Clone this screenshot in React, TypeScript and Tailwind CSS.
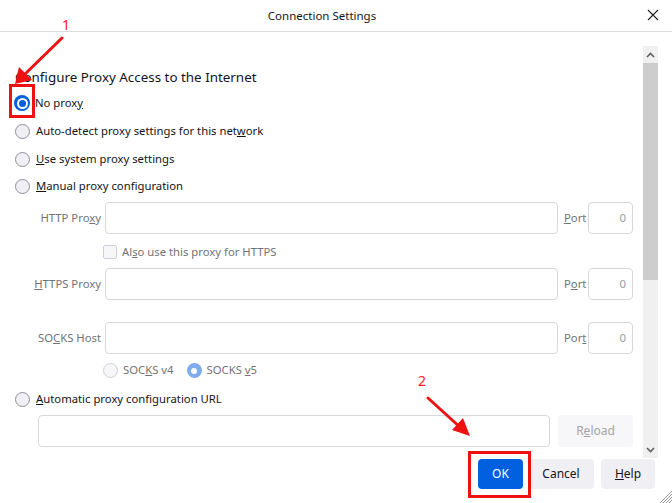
import React from "react";

const font = { fontFamily: '"Noto Sans", "Open Sans", sans-serif' };

function Radio({ checked = false, disabled = false }: { checked?: boolean; disabled?: boolean }) {
  if (checked && disabled) {
    return (
      <span className="flex h-[15px] w-[15px] shrink-0 items-center justify-center rounded-full bg-[#7fabef]">
        <span className="h-[6px] w-[6px] rounded-full bg-white" />
      </span>
    );
  }
  if (checked) {
    return (
      <span className="flex h-[16px] w-[16px] shrink-0 items-center justify-center rounded-full bg-[#0060df]">
        <span className="flex h-[11px] w-[11px] items-center justify-center rounded-full bg-white">
          <span className="h-[7px] w-[7px] rounded-full bg-[#0060df]" />
        </span>
      </span>
    );
  }
  return (
    <span
      className={`h-[15px] w-[15px] shrink-0 rounded-full border ${
        disabled ? "border-[#cfcfd5] bg-[#f7f7f9]" : "border-[#8f8f9d] bg-[#f0f0f4]"
      }`}
    />
  );
}

function Label({ pre = "", ak, rest = "" }: { pre?: string; ak: string; rest?: string }) {
  return (
    <span>
      {pre}
      <u>{ak}</u>
      {rest}
    </span>
  );
}

function ProxyRow({ pre, ak, rest, portPre, portAk, portRest }: { pre: string; ak: string; rest: string; portPre: string; portAk: string; portRest: string }) {
  return (
    <div className="flex h-[32px] items-center">
      <div className="w-[86px] shrink-0 text-right text-[#737373]">
        <Label pre={pre} ak={ak} rest={rest} />
      </div>
      <div className="ml-[4px] h-full flex-1 rounded-[4px] border border-[#d8d8dc] bg-white" />
      <div className="ml-[6px] w-[20px] text-[#737373]">
        <Label pre={portPre} ak={portAk} rest={portRest} />
      </div>
      <div className="ml-[4px] flex h-full w-[45px] items-center justify-end rounded-[4px] border border-[#d8d8dc] bg-white pr-[6px] text-[#9a9a9a]">
        0
      </div>
    </div>
  );
}

export default function App() {
  return (
    <div className="relative h-[503px] w-[672px] overflow-hidden bg-white text-[#15141a]" style={font}>
      {/* title bar */}
      <div className="relative flex h-[32px] items-center justify-center border-b border-[#dadada] pr-[28px] text-[11.5px]">
        <span>Connection Settings</span>
        <svg className="absolute right-[13px] top-[9px]" width="12" height="12" viewBox="0 0 12 12">
          <path d="M1 1 L11 11 M11 1 L1 11" stroke="#222" strokeWidth="1.1" />
        </svg>
      </div>

      {/* body */}
      <div className="flex h-[426px]">
        <div className="flex-1 pl-[15px] pr-[10px] pt-[35px] text-[11.3px]">
          <div className="flex h-[20px] items-center text-[13.4px]">Configure Proxy Access to the Internet</div>
          <div className="mt-[2px] flex h-[28px] items-center">
            <span className="-ml-[1px]"><Radio checked /></span>
            <span className="ml-[5px]">No prox<u>y</u></span>
          </div>
          <div className="flex h-[28px] items-center">
            <Radio />
            <span className="ml-[6px]">Auto-detect proxy settings for this net<u>w</u>ork</span>
          </div>
          <div className="flex h-[28px] items-center">
            <Radio />
            <span className="ml-[6px]"><u>U</u>se system proxy settings</span>
          </div>
          <div className="flex h-[26px] items-center">
            <Radio />
            <span className="ml-[6px]"><u>M</u>anual proxy configuration</span>
          </div>

          <div className="mt-[3px]">
            <ProxyRow pre="HTTP Pro" ak="x" rest="y" portPre="" portAk="P" portRest="ort" />
          </div>
          <div className="flex h-[34px] items-center pl-[88px] pt-[2px] text-[#737373]">
            <span className="h-[14px] w-[14px] rounded-[2px] border border-[#cfcfd5] bg-[#f7f7f9]" />
            <span className="ml-[5px]">Al<u>s</u>o use this proxy for HTTPS</span>
          </div>
          <ProxyRow pre="" ak="H" rest="TTPS Proxy" portPre="P" portAk="o" portRest="rt" />
          <div className="mt-[22px]">
            <ProxyRow pre="SO" ak="C" rest="KS Host" portPre="Por" portAk="t" portRest="" />
          </div>
          <div className="flex h-[33px] items-center pl-[88px] text-[#737373]">
            <Radio disabled />
            <span className="ml-[5px]">SOC<u>K</u>S v4</span>
            <span className="ml-[13px]"><Radio checked disabled /></span>
            <span className="ml-[5px]">SOCKS <u>v</u>5</span>
          </div>
          <div className="flex h-[24px] items-center">
            <Radio />
            <span className="ml-[6px]"><u>A</u>utomatic proxy configuration URL</span>
          </div>
          <div className="mt-[4px] flex h-[32px] pl-[23px]">
            <div className="flex-1 rounded-[4px] border border-[#d8d8dc] bg-white" />
            <div className="ml-[8px] flex w-[75px] items-center justify-center rounded-[4px] bg-[#f7f7f9] text-[12px] text-[#a3a3a8]">
              R<u>e</u>load
            </div>
          </div>
        </div>

        {/* scrollbar */}
        <div className="mr-[14px] mt-[14px] flex w-[15px] flex-col bg-[#f0f0f0]">
          <div className="flex h-[17px] items-center justify-center">
            <svg width="9" height="6" viewBox="0 0 9 6">
              <path d="M1 5 L4.5 1.5 L8 5" stroke="#606060" strokeWidth="1.6" fill="none" />
            </svg>
          </div>
          <div className="h-[217px] bg-[#cdcdcd]" />
          <div className="flex-1" />
          <div className="flex h-[17px] items-center justify-center">
            <svg width="9" height="6" viewBox="0 0 9 6">
              <path d="M1 1 L4.5 4.5 L8 1" stroke="#606060" strokeWidth="1.6" fill="none" />
            </svg>
          </div>
        </div>
      </div>

      {/* footer buttons */}
      <div className="flex justify-end pr-[17px] pt-[1px] text-[12px]">
        <button className="h-[30px] w-[45px] rounded-[4px] bg-[#0060df] text-white">OK</button>
        <button className="ml-[5px] h-[30px] w-[66px] rounded-[4px] bg-[#f0f0f4]">Cancel</button>
        <button className="ml-[7px] h-[30px] w-[54px] rounded-[4px] bg-[#f0f0f4]">
          <u>H</u>elp
        </button>
      </div>

      {/* resize grip */}
      <svg className="absolute bottom-0 right-0" width="13" height="13" viewBox="0 0 13 13">
        <path d="M13 1 L1 13 M13 4 L4 13 M13 7 L7 13 M13 10 L10 13" stroke="#9a9a9a" strokeWidth="1" />
      </svg>

      {/* annotations */}
      <span className="absolute left-[62px] top-[18px] text-[14px] leading-none text-[#ff1a1a]">1</span>
      <span className="absolute left-[418px] top-[374px] text-[14px] leading-none text-[#ff1a1a]">2</span>
      <svg className="pointer-events-none absolute left-0 top-0" width="672" height="503" viewBox="0 0 672 503">
        <g stroke="#ee1111" strokeWidth="3" fill="none" strokeLinecap="round">
          <path d="M62 38 L23 76" />
          <path d="M428 398 L462 429" />
          <rect x="10.5" y="85.5" width="23" height="31" strokeLinecap="butt" />
          <rect x="469.5" y="452.5" width="60" height="44" strokeLinecap="butt" />
        </g>
        <g fill="#ee1111">
          <path d="M15 84 L19 67 L32 80 Z" />
          <path d="M470 436 L452 430 L463 418 Z" />
        </g>
      </svg>
    </div>
  );
}
